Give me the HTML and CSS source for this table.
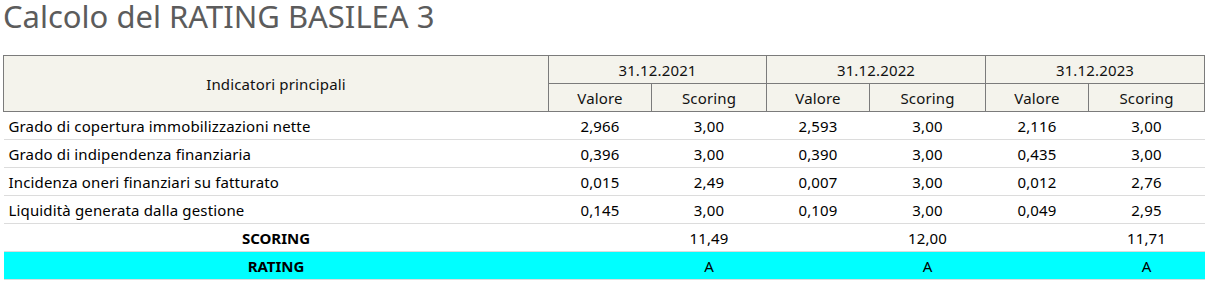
FILE: index.html
```html
<!DOCTYPE html>
<html lang="it">
<head>
<meta charset="utf-8">
<title>Calcolo del RATING BASILEA 3</title>
<link rel="stylesheet" href="styles.css">
</head>
<body>
<h1 class="title">Calcolo del RATING BASILEA 3</h1>
<table class="rating">
  <colgroup>
    <col class="c-name"><col class="c-val"><col class="c-sc"><col class="c-val"><col class="c-sc2"><col class="c-val"><col class="c-sc3">
  </colgroup>
  <thead>
    <tr>
      <th rowspan="2">Indicatori principali</th>
      <th colspan="2">31.12.2021</th>
      <th colspan="2">31.12.2022</th>
      <th colspan="2">31.12.2023</th>
    </tr>
    <tr>
      <th>Valore</th><th>Scoring</th>
      <th>Valore</th><th>Scoring</th>
      <th>Valore</th><th>Scoring</th>
    </tr>
  </thead>
  <tbody>
    <tr>
      <td class="name">Grado di copertura immobilizzazioni nette</td>
      <td>2,966</td><td>3,00</td><td>2,593</td><td>3,00</td><td>2,116</td><td>3,00</td>
    </tr>
    <tr>
      <td class="name">Grado di indipendenza finanziaria</td>
      <td>0,396</td><td>3,00</td><td>0,390</td><td>3,00</td><td>0,435</td><td>3,00</td>
    </tr>
    <tr>
      <td class="name">Incidenza oneri finanziari su fatturato</td>
      <td>0,015</td><td>2,49</td><td>0,007</td><td>3,00</td><td>0,012</td><td>2,76</td>
    </tr>
    <tr>
      <td class="name">Liquidità generata dalla gestione</td>
      <td>0,145</td><td>3,00</td><td>0,109</td><td>3,00</td><td>0,049</td><td>2,95</td>
    </tr>
    <tr class="total">
      <td class="label">SCORING</td>
      <td></td><td>11,49</td><td></td><td>12,00</td><td></td><td>11,71</td>
    </tr>
    <tr class="total rating-row">
      <td class="label">RATING</td>
      <td></td><td>A</td><td></td><td>A</td><td></td><td>A</td>
    </tr>
  </tbody>
</table>
</body>
</html>
```
FILE: styles.css
```css
html, body {
  margin: 0;
  padding: 0;
  background: #ffffff;
}
body {
  padding: 0 3px;
  font-family: "Noto Sans", "Open Sans", "Liberation Sans", sans-serif;
  color: #000;
}
.title {
  margin: 0;
  height: 55px;
  font-size: 31px;
  line-height: 30px;
  padding-top: 1px;
  font-weight: 400;
  color: #5c5c5c;
  box-sizing: border-box;
}
.rating {
  width: 1200px;
  border-collapse: collapse;
  table-layout: fixed;
  font-size: 15px;
  letter-spacing: 0.15px;
}
.c-name { width: 545px; }
.c-val { width: 103px; }
.c-sc { width: 115px; }
.c-sc2 { width: 116px; }
.c-sc3 { width: 116px; }
.rating th {
  background: #f4f3ec;
  border: 1px solid #7b7b7b;
  font-weight: 400;
  color: #111;
  height: 27px;
  padding: 0;
  text-align: center;
}
.rating td {
  border-bottom: 1px solid #dcdcdc;
  height: 27px;
  padding: 0;
  text-align: center;
}
.rating td.name {
  text-align: left;
  padding-left: 5px;
}
.rating td.label {
  font-weight: 700;
  letter-spacing: 0;
}
.rating-row td {
  background: #00ffff;
}
```
